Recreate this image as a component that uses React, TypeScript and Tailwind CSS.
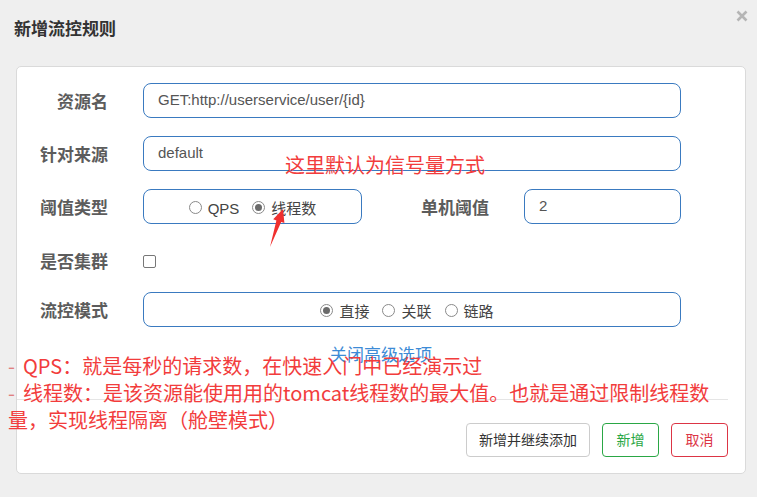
import React from "react";

const Radio = ({ checked, label }: { checked?: boolean; label: string }) => (
  <label className="flex items-center gap-[6px]">
    <span className="flex h-[13px] w-[13px] translate-y-[1px] items-center justify-center rounded-full border border-[#8a8a8a] bg-white">
      {checked && <span className="h-[7px] w-[7px] rounded-full bg-[#6b6b6b]" />}
    </span>
    <span className="translate-y-[2px] text-[15px] leading-none text-[#444]">{label}</span>
  </label>
);

const Label = ({ text, className = "" }: { text: string; className?: string }) => (
  <div className={`translate-y-[2px] text-right text-[17px] font-bold leading-none text-[#5c5c5c] ${className}`}>{text}</div>
);

const App = () => {
  return (
    <div className="relative h-[497px] w-[757px] overflow-hidden bg-[#efefef] font-['Liberation_Sans','Noto_Sans_CJK_SC',sans-serif]">
      {/* Header */}
      <div className="flex h-[56px] items-center justify-between pl-[14px] pr-[9px]">
        <h1 className="translate-y-[1px] text-[17px] font-bold leading-none text-[#333]">新增流控规则</h1>
        <svg width="12" height="12" viewBox="0 0 12 12" className="-mt-[24px]">
          <path d="M1.5 1.5 L10.5 10.5 M10.5 1.5 L1.5 10.5" stroke="#b5b5b5" strokeWidth="2.6" />
        </svg>
      </div>

      {/* Card */}
      <div className="ml-[16px] mt-[10px] h-[408px] w-[730px] rounded-[5px] border border-[#dadada] bg-white">
        {/* 资源名 */}
        <div className="mt-[16px] flex items-center">
          <Label text="资源名" className="w-[91px]" />
          <div className="ml-[35px] flex h-[35px] w-[538px] items-center rounded-[8px] border border-[#3a7ac0] px-[14px] text-[15px] text-[#555]">
            GET:http://userservice/user/{"{id}"}
          </div>
        </div>

        {/* 针对来源 */}
        <div className="mt-[18px] flex items-center">
          <Label text="针对来源" className="w-[91px]" />
          <div className="ml-[35px] flex h-[35px] w-[538px] items-center rounded-[8px] border border-[#3a7ac0] px-[14px] text-[15px] text-[#555]">
            default
          </div>
        </div>

        {/* 阈值类型 */}
        <div className="mt-[18px] flex items-center">
          <Label text="阈值类型" className="w-[91px]" />
          <div className="ml-[35px] flex h-[35px] w-[219px] items-center justify-center gap-[13px] rounded-[8px] border border-[#3a7ac0]">
            <Radio label="QPS" />
            <Radio checked label="线程数" />
          </div>
          <Label text="单机阈值" className="w-[127px]" />
          <div className="ml-[35px] flex h-[35px] w-[157px] items-center rounded-[8px] border border-[#3a7ac0] px-[14px] text-[15px] text-[#555]">
            2
          </div>
        </div>

        {/* 是否集群 */}
        <div className="mt-[19px] flex h-[35px] items-center">
          <Label text="是否集群" className="w-[91px]" />
          <span className="ml-[35px] mt-[2px] h-[13px] w-[13px] rounded-[2px] border border-[#777] bg-white" />
        </div>

        {/* 流控模式 */}
        <div className="mt-[14px] flex items-center">
          <Label text="流控模式" className="w-[91px]" />
          <div className="ml-[35px] flex h-[35px] w-[538px] items-center justify-center gap-[13px] rounded-[8px] border border-[#3a7ac0] pr-[10px]">
            <Radio checked label="直接" />
            <Radio label="关联" />
            <Radio label="链路" />
          </div>
        </div>

        <div className="mt-[19px] text-center text-[17px] leading-[20px] text-[#3d8bd6]">关闭高级选项</div>

        <div className="mr-[17px] mt-[33px] h-px bg-[#e5e5e5]" />

        {/* Footer buttons */}
        <div className="mt-[23px] flex justify-end gap-[12px] pr-[17px] text-[14px]">
          <button className="h-[34px] w-[124px] rounded-[4px] border border-[#cccccc] bg-white text-[#333]">新增并继续添加</button>
          <button className="h-[34px] w-[57px] rounded-[4px] border border-[#2aa745] bg-white text-[#2aa745]">新增</button>
          <button className="h-[34px] w-[57px] rounded-[4px] border border-[#dc3545] bg-white text-[#dc3545]">取消</button>
        </div>
      </div>

      {/* Annotations */}
      <div className="absolute left-[285px] top-[154px] whitespace-nowrap font-['Noto_Sans_CJK_SC',sans-serif] text-[20px] leading-[22px] text-[#f23c3c]">
        这里默认为信号量方式
      </div>
      <div className="absolute left-[8px] top-[352px] whitespace-nowrap font-['Noto_Sans_CJK_SC',sans-serif] text-[20px] leading-[27px] text-[#f23c3c]">
        <div className="flex">
          <span className="w-[15px] text-[#e08080]">-</span>
          <span>QPS：就是每秒的请求数，在快速入门中已经演示过</span>
        </div>
        <div className="flex">
          <span className="w-[15px] text-[#e08080]">-</span>
          <span>线程数：是该资源能使用用的tomcat线程数的最大值。也就是通过限制线程数</span>
        </div>
        <div>量，实现线程隔离（舱壁模式）</div>
      </div>
      <svg className="absolute left-0 top-0" width="757" height="497" viewBox="0 0 757 497">
        <polygon points="283,209 284.4,223.1 281.2,222 270,247 276.4,220.4 273.2,219.3" fill="#f0302f" />
      </svg>
    </div>
  );
};

export default App;
